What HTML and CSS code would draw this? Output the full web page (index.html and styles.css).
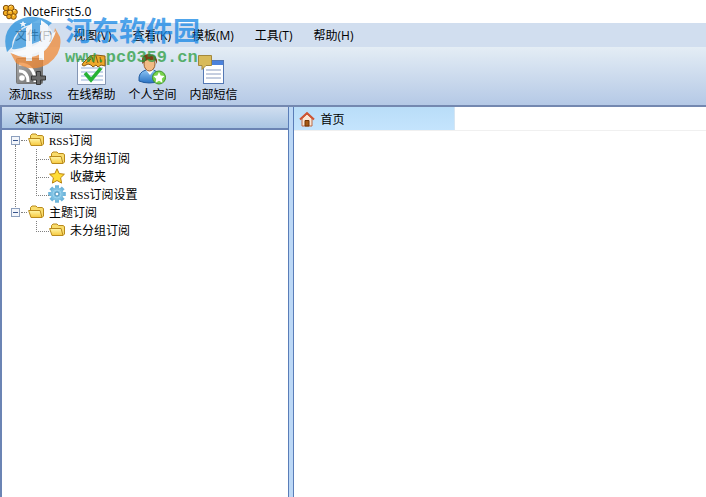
FILE: index.html
```html
<!DOCTYPE html>
<html lang="zh-CN">
<head>
    <meta charset="UTF-8">
    <meta name="viewport" content="width=device-width, initial-scale=1.0">
    <title>NoteFirst5.0</title>
    <link rel="stylesheet" href="styles.css">
</head>
<body>
    <!-- shared icons -->
    <svg class="defs" width="0" height="0" aria-hidden="true">
        <defs>
            <linearGradient id="gold" x1="0" y1="0" x2="0" y2="1">
                <stop offset="0" stop-color="#fff6a8"/>
                <stop offset="1" stop-color="#f6c83c"/>
            </linearGradient>
            <linearGradient id="grey" x1="0" y1="0" x2="1" y2="1">
                <stop offset="0" stop-color="#b0b0b0"/>
                <stop offset="1" stop-color="#666"/>
            </linearGradient>
            <linearGradient id="shirt" x1="0" y1="0" x2="0" y2="1">
                <stop offset="0" stop-color="#8cc4f4"/>
                <stop offset="1" stop-color="#2a73c4"/>
            </linearGradient>
        </defs>
        <symbol id="folder" viewBox="0 0 16 16">
            <path d="M2.500 6V3.500L4 2h4l1.500 1.500H14l1.500 1V12L14 13.500" fill="#f9dc6c" stroke="#b98a1c"/>
            <path d="M.6 6.500h11.500L14 13.500H3z" fill="url(#gold)" stroke="#b98a1c" stroke-linejoin="round"/>
        </symbol>
    </svg>

    <div class="window">
        <header class="title-bar">
            <svg class="app-icon" viewBox="0 0 16 16">
                <g fill="#f4ae22" stroke="#85510c">
                    <circle cx="4" cy="4" r="2.700"/>
                    <circle cx="9" cy="4" r="3"/>
                    <circle cx="4" cy="9" r="2.700"/>
                    <circle cx="12.500" cy="8" r="2.800"/>
                    <circle cx="8" cy="9" r="3"/>
                    <circle cx="11.500" cy="12.500" r="2.800"/>
                    <circle cx="7" cy="12.500" r="2.300"/>
                </g>
                <path d="M7.500 3l2-1M3 3.500l1-1M7 8l2-1M11 7l2-1M11 12l1-1" stroke="#ffe58c"/>
            </svg>
            <span>NoteFirst5.0</span>
        </header>

        <nav class="menu-bar">
            <button type="button">文件(F)</button>
            <button type="button">视图(V)</button>
            <button type="button">查看(K)</button>
            <button type="button">模板(M)</button>
            <button type="button">工具(T)</button>
            <button type="button">帮助(H)</button>
        </nav>

        <div class="toolbar">
            <button type="button">
                <svg viewBox="0 0 32 32">
                    <rect x="1.500" y="5.500" width="26" height="25" rx="1" fill="url(#grey)" stroke="#777"/>
                    <circle cx="7" cy="25" r="2.800" fill="#fff"/>
                    <path d="M4 18q9 0 9 11M4 11q16 0 16 18" fill="none" stroke="#fff" stroke-width="3"/>
                    <path d="M21.500 18.500h4v4.500h5v4h-5v4.500h-4V27h-5v-4h5z" fill="#6a6a6a" stroke="#363636"/>
                </svg>
                <span>添加<span class="latin">RSS</span></span>
            </button>
            <button type="button">
                <svg viewBox="0 0 32 32">
                    <path d="M1.500 6.500h28v25h-28z" fill="#fcfdff" stroke="#8496b4"/>
                    <path d="M5 15h22M5 19h22M5 23h22M5 27h22" stroke="#93aed4"/>
                    <path d="M9 20l6 7 10-12" fill="none" stroke="#25b334" stroke-width="3.500"/>
                    <path d="M7 10l7-7 6-1 9 1v10l-4-1-3 2-2-2-3 2-2-2-3-1-4 2-2-1z" fill="#eda82a" stroke="#8a5a12"/>
                    <path d="M16 4l2 6M20 3l2 7M24 4l1 6M10 10l5-4" stroke="#8a5a12" fill="none"/>
                </svg>
                <span>在线帮助</span>
            </button>
            <button type="button">
                <svg viewBox="0 0 32 32">
                    <path d="M2 28q-1-9 7-11h7q8 2 7 11-11 4-21 0z" fill="url(#shirt)" stroke="#205b9f"/>
                    <path d="M9 17l4 5 4-5z" fill="#fff"/>
                    <ellipse cx="12.500" cy="11" rx="5.500" ry="7" fill="#f1bb85" stroke="#9a5d2b"/>
                    <path d="M5.500 11Q3 1 12 1q9 0 8 10l-2-4-7 0-3 1z" fill="#804017"/>
                    <circle cx="22" cy="24.500" r="6.500" fill="#79d34c" stroke="#3e962a"/>
                    <path d="M22 19l1.700 3.500 3.900.6-2.800 2.700.6 3.900-3.400-1.900-3.400 1.900.6-3.900-2.800-2.700 3.900-.6z" fill="#fff"/>
                </svg>
                <span>个人空间</span>
            </button>
            <button type="button">
                <svg viewBox="0 0 32 32">
                    <rect x="5.500" y="7.500" width="20" height="23" fill="#fff" stroke="#5478b4"/>
                    <path d="M6 8h19v4H6z" fill="#4b82dc"/>
                    <path d="M8 17h15M8 21h15M8 25h15" stroke="#8a9cc0"/>
                    <path d="M.5 2.500h13v10H8l-4 4v-4H.5z" fill="#d8ba5a" stroke="#a3883c"/>
                </svg>
                <span>内部短信</span>
            </button>
        </div>

        <div class="workspace">
            <aside class="sidebar">
                <h2>文献订阅</h2>
                <ul class="tree">
                    <li>
                        <div class="row">
                            <button type="button" class="toggle" aria-label="折叠"></button>
                            <svg viewBox="0 0 16 16"><use href="#folder"/></svg>
                            <span><span class="latin">RSS</span>订阅</span>
                        </div>
                        <ul>
                            <li>
                                <div class="row">
                                    <svg viewBox="0 0 16 16"><use href="#folder"/></svg>
                                    <span>未分组订阅</span>
                                </div>
                            </li>
                            <li>
                                <div class="row">
                                    <svg viewBox="0 0 16 16">
                                        <path d="M8 .8l2.200 4.800 5.200.6-3.800 3.600 1 5.300L8 12.500l-4.600 2.600 1-5.300L.6 6.200l5.200-.6z" fill="#ffdd37" stroke="#b9820f"/>
                                    </svg>
                                    <span>收藏夹</span>
                                </div>
                            </li>
                            <li>
                                <div class="row">
                                    <svg viewBox="0 0 16 16">
                                        <g stroke="#6fb5da" stroke-width="4">
                                            <path d="M8-.8v17.600M-.8 8h17.600M1.800 1.800l12.400 12.400M14.200 1.800L1.800 14.200"/>
                                        </g>
                                        <circle cx="8" cy="8" r="6.500" fill="#7dc0e2"/>
                                        <circle cx="8" cy="8" r="4" fill="none" stroke="#9ad2ee"/>
                                        <circle cx="8" cy="8" r="2" fill="#fff" stroke="#458fb8"/>
                                    </svg>
                                    <span><span class="latin">RSS</span>订阅设置</span>
                                </div>
                            </li>
                        </ul>
                    </li>
                    <li>
                        <div class="row">
                            <button type="button" class="toggle" aria-label="折叠"></button>
                            <svg viewBox="0 0 16 16"><use href="#folder"/></svg>
                            <span>主题订阅</span>
                        </div>
                        <ul>
                            <li>
                                <div class="row">
                                    <svg viewBox="0 0 16 16"><use href="#folder"/></svg>
                                    <span>未分组订阅</span>
                                </div>
                            </li>
                        </ul>
                    </li>
                </ul>
            </aside>
            <div class="splitter"></div>
            <main class="content">
                <div class="tabs">
                    <button type="button" class="tab">
                        <svg viewBox="0 0 16 16">
                            <path d="M3 7.500L8 3l5 4.500V15H3z" fill="#fbe7d6" stroke="#bd6944"/>
                            <path d="M6 9.500h4V15H6z" fill="#a65a15" stroke="#713607"/>
                            <path d="M1 8.500L8 2l7 6.500" fill="none" stroke="#cf5432" stroke-width="2"/>
                        </svg>
                        <span>首页</span>
                    </button>
                </div>
            </main>
        </div>
    </div>

    <!-- site watermark -->
    <div class="watermark">
        <svg viewBox="0 0 60 60">
            <circle cx="31" cy="33" r="22" fill="#fff" opacity=".6"/>
            <path d="M5 43Q-1 24 13 13 31 2 50 14L45 18Q32 12 20 19 10 27 10 38z" fill="#238edb"/>
            <path d="M58 28Q61 44 46 55 30 64 14 54L8 43Q20 51 34 47 50 41 53 19z" fill="#f18a36"/>
            <path d="M13 30Q18 20 25 18v19q-8 4-15 3z" fill="#3b9be0"/>
            <path d="M30 14l8-4v22l-8 3z" fill="#3b9be0"/>
            <path d="M39 11l7 5v17q-4 4-7 5z" fill="#fff"/>
            <path d="M24 19l6-5v38h-6zM37 32h5v19h-5z" fill="#fff"/>
            <path d="M6 43Q25 45 54 22 49 40 31 45 16 48 6 43z" fill="#fff"/>
            <path d="M21 12l1 2 2.500 0-2 1.500 1 2.500-2.500-1.500-2 1.500.5-2.500-2-1.500 2.500 0z" fill="#fff"/>
        </svg>
        <div class="mark-text">
            <span class="site-name">河东软件园</span>
            <span class="site-url">www.pc0359.cn</span>
        </div>
    </div>
</body>
</html>
```
FILE: styles.css
```css
* {
    box-sizing: border-box;
}

body {
    margin: 0;
    background-color: #fff;
    color: #000;
    font-family: "Noto Sans CJK SC", sans-serif;
    font-size: 12px;
    line-height: 18px;
}

button {
    margin: 0;
    padding: 0;
    border: none;
    background: none;
    color: inherit;
    font: inherit;
    white-space: nowrap;
}

ul {
    margin: 0;
    padding: 0;
    list-style: none;
}

svg {
    display: block;
    flex-shrink: 0;
}

.defs {
    position: absolute;
}

.latin {
    font-family: "Liberation Serif", serif;
    font-size: 11px;
}

.window {
    display: flex;
    flex-direction: column;
    min-height: 100vh;
}

.title-bar {
    display: flex;
    align-items: center;
    gap: 5px;
    height: 23px;
    padding-left: 2px;
    font-family: "Open Sans", sans-serif;
}

.app-icon {
    width: 16px;
    height: 16px;
}

.menu-bar {
    display: flex;
    gap: 21px;
    height: 24px;
    padding: 1px 15px 0;
    background-color: #d1deef;
    font-family: "Open Sans", "Noto Sans CJK SC", sans-serif;
}

/* Toolbar */
.toolbar {
    display: flex;
    height: 60px;
    border-bottom: 2px solid #7488b0;
    background: linear-gradient(#e4edf5, #b5c9e6);
}

.toolbar button {
    display: flex;
    flex-direction: column;
    align-items: center;
    width: 61px;
    padding-top: 6px;
}

.toolbar svg {
    width: 32px;
    height: 32px;
}

/* Sidebar */
.workspace {
    display: flex;
    flex: 1;
}

.sidebar {
    width: 41%;
    border-left: 2px solid #6b84b4;
    border-right: 1px solid #5a7db8;
}

.sidebar h2 {
    margin: 0;
    height: 23px;
    padding-left: 13px;
    border-bottom: 2px solid #6b84b4;
    background: linear-gradient(#d0def0, #a9c5e3);
    font-size: 12px;
    font-weight: normal;
    line-height: 22px;
}

.tree {
    padding: 1px 0 0 9px;
}

.row {
    display: flex;
    align-items: center;
    height: 18px;
}

.row svg {
    width: 16px;
    height: 16px;
    margin-right: 5px;
    overflow: visible;
}

.toggle {
    width: 9px;
    height: 9px;
    border: 1px solid #8c9fbd;
    background: linear-gradient(#39558c, #39558c) center / 5px 1px no-repeat #f3f6fb;
}

/* dotted connectors between tree nodes */
.toggle + svg {
    margin-left: 8px;
}

.tree > li {
    position: relative;
}

.tree > li > .row::before {
    content: "";
    position: absolute;
    left: 10px;
    width: 6px;
    border-top: 1px dotted #808080;
}

.tree > li:not(:last-child)::after {
    content: "";
    position: absolute;
    top: 14px;
    bottom: -4px;
    left: 4px;
    border-left: 1px dotted #808080;
}

.tree ul {
    padding-left: 25px;
}

.tree ul li {
    position: relative;
    padding-left: 13px;
}

.tree ul li::before {
    content: "";
    position: absolute;
    top: 0;
    left: 0;
    width: 12px;
    height: 10px;
    border-left: 1px dotted #808080;
    border-bottom: 1px dotted #808080;
}

.tree ul li:not(:last-child)::after {
    content: "";
    position: absolute;
    top: 10px;
    bottom: 0;
    left: 0;
    border-left: 1px dotted #808080;
}

.splitter {
    width: 5px;
    border-right: 1px solid #5a7db8;
    background-color: #bcd8f6;
    cursor: col-resize;
}

/* Tabs */
.content {
    flex: 1;
}

.tabs {
    display: flex;
    height: 24px;
    border-bottom: 1px solid #f0f0f0;
}

.tab {
    display: flex;
    align-items: center;
    gap: 5px;
    width: 161px;
    padding-left: 5px;
    border-right: 1px solid #d5e5f2;
    background: linear-gradient(#b9ddf8, #c4e4fd);
    line-height: 22px;
}

.tab svg {
    width: 16px;
    height: 16px;
}

/* Watermark */
.watermark {
    position: absolute;
    top: 9px;
    left: 2px;
    display: flex;
    gap: 3px;
    opacity: 0.75;
    pointer-events: none;
}

.watermark svg {
    width: 60px;
    height: 60px;
}

.mark-text {
    display: flex;
    flex-direction: column;
    padding-top: 5px;
}

.site-name {
    color: #1587e5;
    font-size: 27px;
    font-weight: bold;
    line-height: 32px;
}

.site-url {
    color: #2a9c40;
    font-family: "Liberation Mono", monospace;
    font-size: 17px;
    font-weight: bold;
    line-height: 24px;
}
```
